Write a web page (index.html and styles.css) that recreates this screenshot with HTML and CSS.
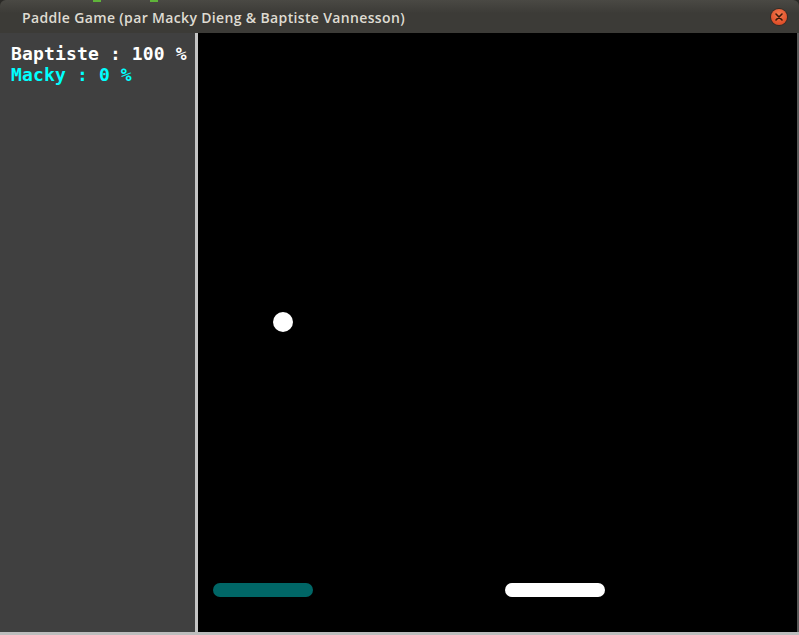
FILE: index.html
```html
<!DOCTYPE html>
<html>
<head>
<meta charset="utf-8">
<link rel="stylesheet" href="styles.css">
</head>
<body>
<div class="window">
  <div class="topstrip"><span class="dot d1"></span><span class="dot d2"></span></div>
  <div class="titlebar">
    <span class="title">Paddle Game (par Macky Dieng &amp; Baptiste Vannesson)</span>
    <span class="close"><svg width="10" height="10" viewBox="0 0 10 10"><path d="M2 2 L8 8 M8 2 L2 8" stroke="#3a1a0a" stroke-width="1.6" stroke-linecap="round"/></svg></span>
  </div>
  <div class="main">
    <div class="panel">
      <div class="score p1">Baptiste : 100 %</div>
      <div class="score p2">Macky : 0 %</div>
    </div>
    <div class="divider"></div>
    <div class="canvas">
      <div class="ball"></div>
      <div class="paddle teal"></div>
      <div class="paddle white"></div>
    </div>
    <div class="redge"></div>
  </div>
  <div class="bottom"></div>
</div>
</body>
</html>
```
FILE: styles.css
```css
html, body { margin: 0; padding: 0; }
body { background: #2a2926; width: 799px; height: 635px; overflow: hidden; }
.window { display: flex; flex-direction: column; width: 799px; height: 635px; position: relative; }
.topstrip { position: absolute; top: 0; left: 0; right: 0; height: 2px; z-index: 2; }
.dot { position: absolute; top: 0; height: 2px; width: 8px; background: #5fb43a; }
.d1 { left: 93px; } .d2 { left: 150px; }
.titlebar {
  height: 33px; flex: none; box-sizing: border-box;
  background: linear-gradient(#4a4944, #3c3b37 40%, #3c3b37);
  border-radius: 6px 6px 0 0;
  display: flex; align-items: center; padding-left: 22px; padding-top: 1px;
  position: relative;
}
.title { font-family: "Open Sans", "DejaVu Sans", sans-serif; font-weight: 600; font-size: 14px; color: #dfdbd2; letter-spacing: 0.35px; }
.close {
  position: absolute; right: 12px; top: 9px; width: 16px; height: 16px; border-radius: 50%;
  background: radial-gradient(circle at 50% 35%, #f37a4e, #e0502a 70%, #c8431f);
  display: flex; align-items: center; justify-content: center;
  box-shadow: 0 0 0 1px #3a2a22;
}
.main { flex: 1; display: flex; }
.panel { width: 195px; background: #404040; padding: 10px 0 0 11px; box-sizing: border-box; }
.score { font-family: "DejaVu Sans Mono", monospace; font-weight: bold; font-size: 18px; line-height: 21px; letter-spacing: 0.15px; white-space: pre; }
.p1 { color: #ffffff; }
.p2 { color: #00ffff; }
.divider { width: 3px; background: #c4c4c4; }
.canvas { flex: 1; background: #000; position: relative; }
.redge { width: 2px; background: #5a5a5a; }
.bottom { height: 3px; flex: none; background: #bdbdbd; }
.ball { position: absolute; left: 75px; top: 279px; width: 20px; height: 20px; border-radius: 50%; background: #fff; }
.paddle { position: absolute; top: 550px; width: 100px; height: 14px; border-radius: 7px; }
.teal { left: 15px; background: #006666; }
.white { left: 307px; background: #fff; }
```
